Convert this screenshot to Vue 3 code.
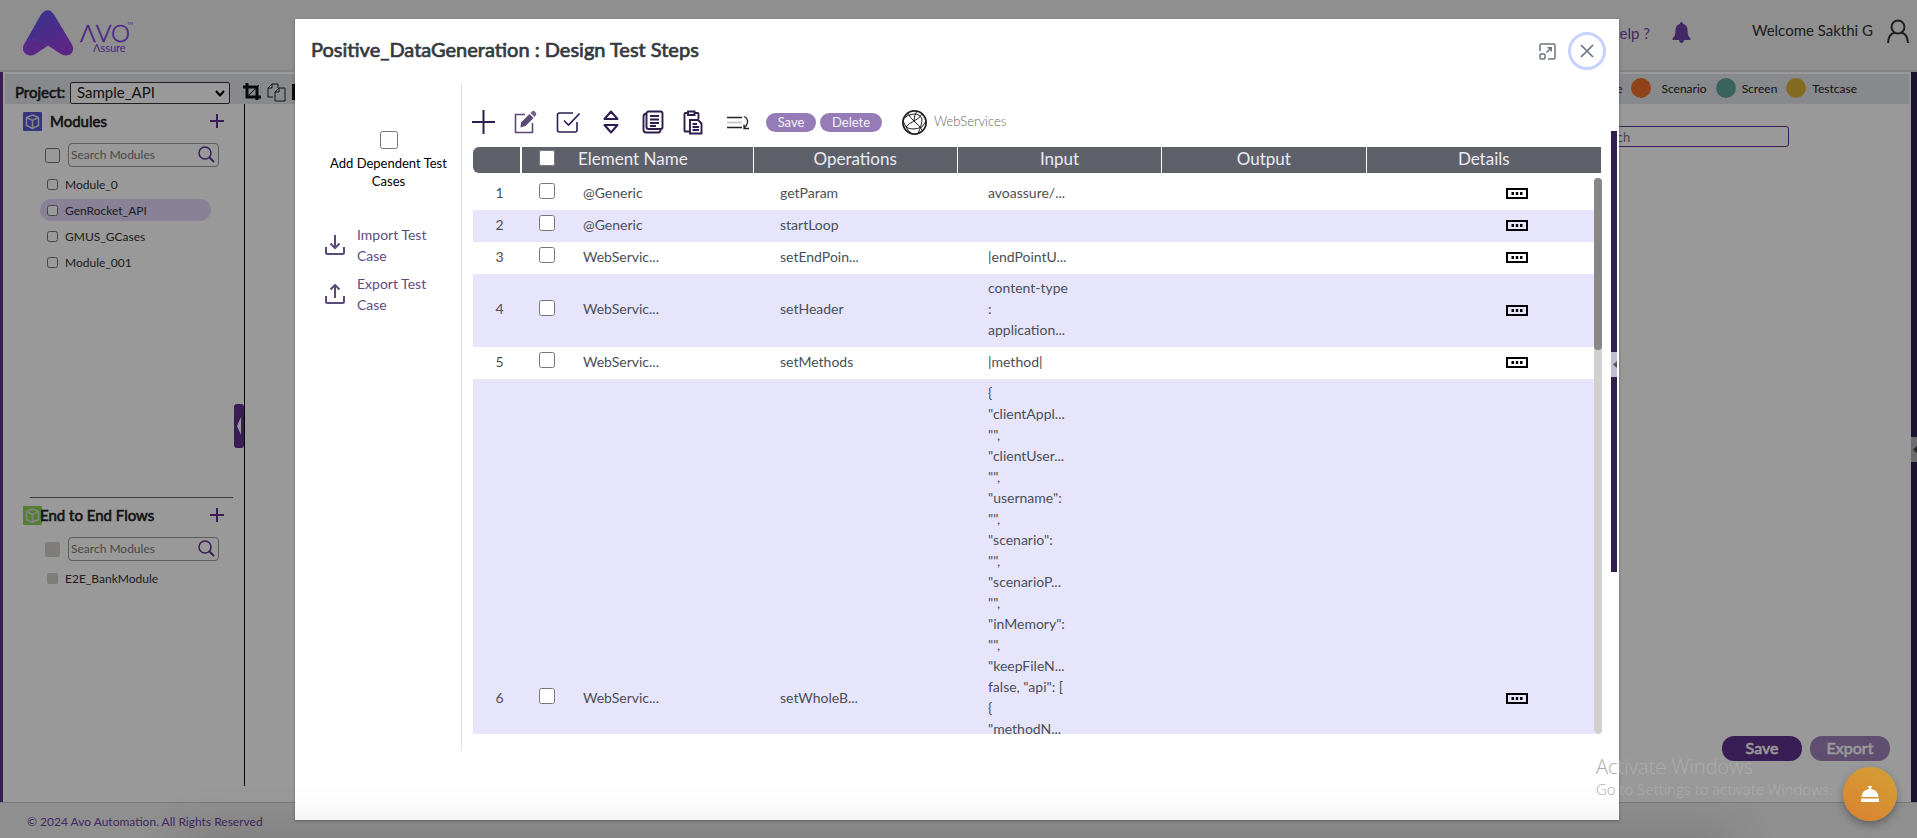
<script setup>
import { ref, reactive, computed } from 'vue'

const project = ref('Sample_API')
const modules = reactive([
  { name: 'Module_0', checked: false, active: false },
  { name: 'GenRocket_API', checked: false, active: true },
  { name: 'GMUS_GCases', checked: false, active: false },
  { name: 'Module_001', checked: false, active: false },
])
const legend = [
  { name: 'Module', kind: 'module' },
  { name: 'Scenario', kind: 'scenario' },
  { name: 'Screen', kind: 'screen' },
  { name: 'Testcase', kind: 'testcase' },
]
const headings = ['Operations', 'Input', 'Output', 'Details']
const steps = reactive([
  { element: '@Generic', op: 'getParam', input: ['avoassure/...'], checked: false },
  { element: '@Generic', op: 'startLoop', input: [], checked: false },
  { element: 'WebServic...', op: 'setEndPoin...', input: ['|endPointU...'], checked: false },
  { element: 'WebServic...', op: 'setHeader', input: ['content-type', ':', 'application...'], checked: false },
  { element: 'WebServic...', op: 'setMethods', input: ['|method|'], checked: false },
  {
    element: 'WebServic...',
    op: 'setWholeB...',
    tall: true,
    checked: false,
    input: ['{', '"clientAppl...', '"",', '"clientUser...', '"",', '"username":', '"",', '"scenario":', '"",', '"scenarioP...', '"",', '"inMemory":', '"",', '"keepFileN...', 'false, "api": [', '{', '"methodN...'],
  },
])
const all = computed({
  get: () => steps.every((s) => s.checked),
  set: (v) => steps.forEach((s) => (s.checked = v)),
})
const scroll = ref(0)
function onScroll(e) {
  scroll.value = (e.target.scrollTop / e.target.scrollHeight) * 100
}
</script>

<template>
  <div class="page">
    <header class="top">
      <svg class="logo" width="120" height="50" viewBox="0 0 120 50" role="img" aria-label="Avo Assure">
        <defs>
          <linearGradient id="lg" x1="0" y1="0" x2="0.6" y2="1">
            <stop offset="0" stop-color="#5a58f0" />
            <stop offset="1" stop-color="#9a40e0" />
          </linearGradient>
          <linearGradient id="lt" x1="0" y1="0" x2="1" y2="0">
            <stop offset="0" stop-color="#6a35d8" />
            <stop offset="1" stop-color="#8f46e8" />
          </linearGradient>
        </defs>
        <path d="M18 4.500Q25 -4 31 4.500L49 34.500Q52 41 47 44.500Q42 47 37 43.500L25 35.500L13 43.500Q8 47 3 44Q-2 40 1 34.500Z" fill="url(#lg)" />
        <path d="M1 34.500Q3 30 9 30Q16 30 25 35.500L13 43.500Q8 47 3 44Q-2 40 1 34.500Z" fill="#9a42dc" opacity=".55" />
        <path d="M3 31Q12 27 25 35.500" fill="none" stroke="#8468ff" stroke-width=".8" stroke-dasharray="2 1" />
        <text x="57" y="32" class="brand">ΛVO</text>
        <text x="70" y="42" class="brand-sub">Λssure</text>
        <text x="104" y="15" class="brand-tm">TM</text>
      </svg>
      <a href="#" class="help">Help ?</a>
      <button class="plain bell" aria-label="Notifications">
        <svg width="19" height="21" viewBox="0 0 19 21"><path d="M9.500 0C10.500 0 11 .8 11 1.700C14 2.500 15.500 5 15.500 8C15.500 13 16.500 14.500 18.500 16.500Q19 18 17.500 18H1.500Q0 18 .5 16.500C2.500 14.500 3.500 13 3.500 8C3.500 5 5 2.500 8 1.700C8 .8 8.500 0 9.500 0ZM7 18H12Q11.500 21 9.500 21Q7.500 21 7 18Z" fill="#6f45a5" /></svg>
      </button>
      <span class="welcome">Welcome Sakthi G</span>
      <button class="plain user" aria-label="Account">
        <svg width="22" height="24" viewBox="0 0 22 24" fill="none" stroke="#333" stroke-width="2"><circle cx="11" cy="8" r="6.500" /><path d="M1 24Q1.500 14.500 8 13.500M14 13.500Q20.500 14.500 21 24" /></svg>
      </button>
    </header>

    <main class="work">
      <div class="bar">
        <label for="project" class="project">Project:</label>
        <div class="pick">
          <select id="project" v-model="project"><option>Sample_API</option></select>
          <svg class="caret" width="10" height="7" viewBox="0 0 10 7" fill="none" stroke="#000" stroke-width="2"><path d="M1 1L5 5.500L9 1" /></svg>
        </div>
        <svg class="tool" width="18" height="18" viewBox="0 0 18 18" fill="none" stroke="#111" stroke-width="3"><path d="M0 4H14V17M4 0V14H18" /><path d="M4 14L16 2" stroke-width="1" /></svg>
        <svg class="tool" width="19" height="19" viewBox="0 0 19 19" fill="none" stroke="#222" stroke-width="1"><path d="M6 14H1V5L5 1H11V5M5 1V5H1M8 9L12 5H18V18H8ZM12 5V9H8" /></svg>
        <svg class="tool" width="18" height="18" viewBox="0 0 18 18"><rect width="18" height="16" y="1" fill="#111" /></svg>
        <ul class="legend">
          <li v-for="l in legend" :key="l.name" :class="l.kind"><i></i><span>{{ l.name }}</span></li>
        </ul>
      </div>

      <div class="columns">
        <aside class="side">
          <section class="mods">
            <div class="head">
              <svg width="19" height="19" viewBox="0 0 19 19"><rect width="19" height="19" rx="1" fill="#5a56d8" /><path d="M9.500 3L15.500 5.500V13.500L9.500 16.500L3.500 13.500V5.500Z" fill="none" stroke="#ddd" stroke-width="1.500" /><path d="M3.500 5.500L9.500 8.500L15.500 5.500M9.500 8.500V16.500" fill="none" stroke="#ddd" stroke-width="1.500" /></svg>
              <h2 class="spaced">Modules</h2>
              <button class="plain" aria-label="Add module"><svg width="14" height="14" viewBox="0 0 14 14"><path d="M0 7H14M7 0V14" stroke="#5f338f" stroke-width="2" /></svg></button>
            </div>
            <div class="find">
              <input type="checkbox" class="mid" aria-label="Select all modules" />
              <div class="box">
                <input type="text" placeholder="Search Modules" aria-label="Search Modules" />
                <svg width="17" height="17" viewBox="0 0 17 17" fill="none" stroke="#5f338f" stroke-width="1.500"><circle cx="7" cy="7" r="6" /><path d="M11 11L16 16" stroke-width="2" /></svg>
              </div>
            </div>
            <ul class="list">
              <li v-for="m in modules" :key="m.name" :class="{ active: m.active }">
                <label><input v-model="m.checked" type="checkbox" class="small" />{{ m.name }}</label>
              </li>
            </ul>
          </section>
          <section class="flows">
            <div class="head">
              <svg width="19" height="19" viewBox="0 0 19 19"><rect width="19" height="19" rx="1" fill="#8cd358" /><path d="M9.500 3L15.500 5.500V13.500L9.500 16.500L3.500 13.500V5.500Z" fill="none" stroke="#ddd" stroke-width="1.500" /><path d="M3.500 5.500L9.500 8.500L15.500 5.500M9.500 8.500V16.500" fill="none" stroke="#ddd" stroke-width="1.500" /></svg>
              <h2 class="tight">End to End Flows</h2>
              <button class="plain" aria-label="Add flow"><svg width="14" height="14" viewBox="0 0 14 14"><path d="M0 7H14M7 0V14" stroke="#5f338f" stroke-width="2" /></svg></button>
            </div>
            <div class="find">
              <input type="checkbox" class="mid off" disabled aria-label="Select all flows" />
              <div class="box">
                <input type="text" placeholder="Search Modules" aria-label="Search flows" />
                <svg width="17" height="17" viewBox="0 0 17 17" fill="none" stroke="#5f338f" stroke-width="1.500"><circle cx="7" cy="7" r="6" /><path d="M11 11L16 16" stroke-width="2" /></svg>
              </div>
            </div>
            <ul class="list">
              <li><label><input type="checkbox" class="small off" disabled />E2E_BankModule</label></li>
            </ul>
          </section>
          <button class="plain handle" aria-label="Collapse sidebar"><svg width="5" height="18" viewBox="0 0 5 18"><path d="M4 0V18L0 9Z" fill="#fff" /></svg></button>
        </aside>
        <div class="canvas">
          <input type="text" class="search" placeholder="Search" aria-label="Search" />
          <div class="actions">
            <button class="pill strong">Save</button>
            <button class="pill faint">Export</button>
          </div>
        </div>
      </div>
      <button class="plain edge" aria-label="Open panel"><svg width="4" height="7" viewBox="0 0 4 7"><path d="M4 0V7L0 3.500Z" fill="#444" /></svg></button>
    </main>

    <footer class="foot">© 2024 Avo Automation. All Rights Reserved</footer>

    <div class="mask">
      <div class="modal" role="dialog" aria-labelledby="dlg-title">
        <div class="modal-head">
          <h1 id="dlg-title">Positive_DataGeneration : Design Test Steps</h1>
          <button class="plain" aria-label="Maximize">
            <svg width="17" height="17" viewBox="0 0 17 17" fill="none" stroke="#6c757d" stroke-width="1.500"><path d="M1 8V2.500Q1 1 2.500 1H14.500Q16 1 16 2.500V14.500Q16 16 14.500 16H9" /><rect x="1" y="11" width="5" height="5" rx="1" /><path d="M7.500 9.500L12 5M8.500 4.800H12.200V8.500" /></svg>
          </button>
          <button class="plain close" aria-label="Close">
            <svg width="14" height="14" viewBox="0 0 14 14"><path d="M1 1L13 13M13 1L1 13" stroke="#6c757d" stroke-width="1.700" /></svg>
          </button>
        </div>
        <div class="modal-body">
          <aside class="panel">
            <label class="dependent"><input type="checkbox" class="large" /><span>Add Dependent Test Cases</span></label>
            <button class="plain io">
              <svg width="20" height="20" viewBox="0 0 20 20" fill="none" stroke="#5b4a75" stroke-width="2"><path d="M1 12V17.500Q1 19 2.500 19H17.500Q19 19 19 17.500V12M10 0V13M5.500 8.500L10 13L14.500 8.500" /></svg>
              <span>Import Test Case</span>
            </button>
            <button class="plain io">
              <svg width="20" height="20" viewBox="0 0 20 20" fill="none" stroke="#5b4a75" stroke-width="2"><path d="M1 12V17.500Q1 19 2.500 19H17.500Q19 19 19 17.500V12M10 14V1M5.500 5.500L10 1L14.500 5.500" /></svg>
              <span>Export Test Case</span>
            </button>
          </aside>
          <section class="steps">
            <div class="toolbar">
              <div class="icons">
                <button class="plain" aria-label="Add step"><svg width="23" height="24" viewBox="0 0 23 24"><path d="M0 12H23M11.500 0V24" stroke="#2f1d4d" stroke-width="2" /></svg></button>
                <button class="plain" aria-label="Edit step"><svg width="23" height="24" viewBox="0 0 23 24"><path d="M11 4.500H1.500V22.500H18.500V13" fill="none" stroke="#5b4a75" stroke-width="1.600" /><path d="M7 12.500L15.500 4L19.500 8L11.500 16L6.500 17.500Z" fill="#5b4a75" /><path d="M16.500 3L18.500 1Q19.500 .5 20.500 1.300L22 3Q22.800 4 22 5L20.500 7Z" fill="#6f6088" /></svg></button>
                <button class="plain" aria-label="Select steps"><svg width="24" height="24" viewBox="0 0 24 24" fill="none" stroke="#2f1d4d" stroke-width="1.600"><path d="M17 3H3.500Q1.500 3 1.500 5V20Q1.500 22 3.500 22H19Q21 22 21 20V12M8 10.500L12.500 15L23.500 3.500" /></svg></button>
                <button class="plain" aria-label="Move step"><svg width="24" height="24" viewBox="0 0 24 24" fill="none" stroke="#2f1d4d" stroke-width="2" stroke-linejoin="round"><path d="M12 1.500L18.500 9H5.500ZM12 22.500L18.500 15H5.500Z" /></svg></button>
                <button class="plain" aria-label="Copy steps"><svg width="22" height="24" viewBox="0 0 22 24" fill="none" stroke="#2f1d4d" stroke-width="1.900"><rect x="4.500" y="1.500" width="16" height="17.500" rx="2" /><path d="M4.500 3.500Q1.500 4 1.500 6.500V19.500Q1.500 22.500 4 22.500H16.500Q18.500 22.500 18.500 19.500M8 6H17M8 9.500H17M8 13H17M8 16H14" /></svg></button>
                <button class="plain" aria-label="Paste steps"><svg width="20" height="25" viewBox="0 0 20 25" fill="none" stroke="#2f1d4d" stroke-width="1.900"><path d="M6 21.500H2.500Q1.500 21.500 1.500 20.500V4Q1.500 3 2.500 3H5M11 3H14.500Q15.500 3 15.500 4V9M5 1.500H11.500V5H5Z" /><path d="M7 10H15L18.500 13.500V23.500H7ZM9.500 14H14M9.500 17H16M9.500 20H16" /></svg></button>
                <button class="plain" aria-label="Skip to step"><svg width="32" height="24" viewBox="0 0 32 24" fill="none"><path d="M5 7.500H20M5 17.500H20" stroke="#222" stroke-width="1.500" /><path d="M5 12.500H20" stroke="#ccc" stroke-width="2" /><path d="M22 6.500Q26 8 25.500 12.500Q25 16 22 18M22 14.500V18.500H27" stroke="#222" stroke-width="1.300" /></svg></button>
              </div>
              <button class="chip save">Save</button>
              <button class="chip delete">Delete</button>
              <div class="service">
                <svg width="25" height="25" viewBox="0 0 25 25" fill="none" stroke="#222" stroke-width="1"><circle cx="12.500" cy="12.500" r="11.600" stroke-width="1.800" /><path d="M6 3Q8 8 12 11M15 1Q12 5 12 11M20 4Q17 9 12 11M12 11Q7 13 4 17L1 11M12 11Q17 15 20 20M4 17Q10 21 20 17L24 11M1 9Q6 4 12 4Q18 4 20 9Q20 14 16 24M4 17Q6 21 10 24" /></svg>
                <span>WebServices</span>
              </div>
            </div>
            <table class="thead">
              <colgroup><col class="h-num" /><col class="h-el" /><col /><col /><col /><col class="h-det" /></colgroup>
              <thead>
                <tr>
                  <th class="first"></th>
                  <th class="el"><input v-model="all" type="checkbox" class="row" aria-label="Select all steps" /><span>Element Name</span></th>
                  <th v-for="h in headings" :key="h">{{ h }}</th>
                </tr>
              </thead>
            </table>
            <div class="view">
              <div class="rows" @scroll="onScroll">
                <table class="tbody">
                  <colgroup><col class="b-num" /><col class="b-check" /><col class="b-el" /><col class="b-op" /><col class="b-in" /><col /><col class="b-det" /></colgroup>
                  <tbody>
                    <tr v-for="(s, i) in steps" :key="i" :class="{ tall: s.tall }">
                      <td class="num">{{ i + 1 }}</td>
                      <td class="check"><input v-model="s.checked" type="checkbox" class="row" :aria-label="'Select step ' + (i + 1)" /></td>
                      <td>{{ s.element }}</td>
                      <td>{{ s.op }}</td>
                      <td class="in"><div v-for="(t, k) in s.input" :key="k">{{ t }}</div></td>
                      <td></td>
                      <td class="det">
                        <button class="plain" aria-label="Details"><svg width="22" height="11" viewBox="0 0 22 11"><rect x="1" y="1" width="20" height="9" fill="none" stroke="#000" stroke-width="2" /><path d="M5.500 4H8V7H5.500ZM9.800 4H12.200V7H9.800ZM14 4H16.500V7H14Z" /></svg></button>
                      </td>
                    </tr>
                  </tbody>
                </table>
              </div>
              <div class="track"><div class="thumb" :style="{ top: scroll + '%' }"></div></div>
            </div>
          </section>
        </div>
        <button class="plain rail" aria-label="Open details"><span><svg width="4" height="7" viewBox="0 0 4 7"><path d="M4 0V7L0 3.500Z" fill="#555" /></svg></span></button>
      </div>
    </div>

    <div class="glow"></div>
    <div class="watermark">
      <p class="wm-big">Activate Windows</p>
      <p class="wm-small">Go to Settings to activate Windows.</p>
    </div>
    <button class="plain fab" aria-label="Assistance">
      <svg width="18" height="17" viewBox="0 0 18 17" fill="#fff"><path d="M7 0H11V1.500H10V3Q17 4 17.500 11H.5Q1 4 8 3V1.500H7ZM0 12.500H18V16H0Z" /></svg>
    </button>
  </div>
</template>

<style>
body { margin: 0; }
</style>

<style scoped>
* { box-sizing: border-box; }
.page { position: relative; display: flex; flex-direction: column; height: 100vh; overflow: hidden; background: #fff; font-family: Lato, "Liberation Sans", sans-serif; font-size: 14px; color: #343a40; }
button, input, select { font-family: inherit; }
h1, h2, p, ul { margin: 0; padding: 0; }
ul { list-style: none; }
input[type="checkbox"] { margin: 0; flex: none; }
.plain { display: flex; align-items: center; justify-content: center; padding: 0; border: 0; background: none; color: inherit; cursor: pointer; }
.small { width: 11px; height: 11px; }
.mid { width: 15px; height: 15px; }
.row { width: 16px; height: 16px; }
.large { width: 18px; height: 18px; }
.off { appearance: none; border-radius: 2px; background: #d3d0cb; }

.top { display: flex; align-items: center; flex: none; height: 72px; padding: 0 8px 0 23px; background: #eee; border-bottom: 2px solid #dcdcdc; }
.brand { font-size: 24px; font-weight: 300; fill: url(#lt); stroke: #7a3de0; stroke-width: 0.5px; }
.brand-sub { font-size: 11px; fill: #7e40dd; }
.brand-tm { font-size: 4px; fill: #7e40dd; }
.logo { margin-bottom: 1px; overflow: visible; }
.help { margin-left: auto; font-size: 15px; color: #7347a5; text-decoration: none; padding-bottom: 4px; }
.bell { margin: 0 61px 6px 22px; }
.welcome { font-size: 15px; color: #333; padding-bottom: 10px; }
.user { margin: 0 0 8px 14px; }

.work { position: relative; z-index: 0; display: flex; flex-direction: column; flex: 1; min-height: 0; padding: 2px 8px 0 5px; }
.work::before, .work::after { content: ""; position: absolute; top: 0; bottom: 0; }
.work::before { left: 0; width: 3px; background: #5f338f; }
.work::after { right: 0; width: 6px; background: #2d2050; }
.bar { display: flex; align-items: center; flex: none; height: 30px; padding-left: 10px; background: #e3e5e9; }
.project { width: 55px; font-size: 15px; -webkit-text-stroke: 0.6px; color: #222; padding-top: 6px; }
.pick { position: relative; align-self: flex-end; margin-right: 13px; }
.pick select { appearance: none; display: block; width: 160px; height: 22px; padding: 0 6px 2px; border: 1px solid #333; border-radius: 2px; background: #fff; font-size: 15px; line-height: 18px; color: #222; }
.caret { position: absolute; right: 5px; top: 8px; pointer-events: none; }
.tool { margin: 6px 6px 0 0; }
.legend { display: flex; margin-left: auto; padding: 0 52px 2px 0; font-size: 12px; color: #222; }
.legend li { display: flex; align-items: center; gap: 6px; margin-left: 9px; }
.legend i { width: 20px; height: 20px; border-radius: 50%; }
.module i { background: #8a4ff0; }
.scenario i { background: #f07028; }
.legend .scenario { gap: 10px; }
.screen i { background: #5fa59b; }
.testcase i { background: #dcb338; }

.columns { display: flex; flex: 1; min-height: 0; }
.side { position: relative; display: flex; flex-direction: column; flex: none; width: 240px; margin-bottom: 16px; padding-left: 18px; border-right: 1px solid #000; }
.mods { position: relative; height: 394px; margin-right: 11px; padding-top: 7px; }
.mods::after { content: ""; position: absolute; left: 7px; right: 0; bottom: 0; height: 1px; background: #666; }
.flows { margin-right: 11px; padding-top: 7px; }
.head { display: flex; align-items: center; height: 20px; }
.head h2 { font-size: 15px; font-weight: 400; -webkit-text-stroke: 0.6px; color: #222; }
.head .spaced { margin-left: 8px; }
.head .tight { margin-left: -2px; }
.head button { margin: 0 9px 0 auto; }
.find { display: flex; align-items: center; margin: 12px 14px 0 22px; gap: 8px; }
.box { display: flex; align-items: center; flex: 1; min-width: 0; height: 24px; padding: 0 3px 2px 2px; border: 1px solid #999; border-radius: 4px; }
.box input { flex: 1; min-width: 0; height: 18px; padding: 0; border: 0; background: none; font-size: 12px; outline: 0; }
.box input::placeholder { color: #7a7a7a; }
.list { margin: 6px 22px 0 17px; }
.list li { height: 22px; margin-bottom: 4px; padding-left: 7px; border-radius: 11px; }
.list label { display: flex; align-items: center; gap: 7px; height: 22px; font-size: 12px; color: #333; }
.active { background: #e4d9fb; }
.handle { position: absolute; right: 0; top: 300px; width: 10px; height: 44px; border-radius: 3px; background: #5f338f; }
.canvas { display: flex; flex-direction: column; align-items: flex-end; justify-content: space-between; flex: 1; padding: 22px 19px 41px 0; }
.search { width: 244px; height: 21px; margin-right: 101px; padding: 0 46px; border: 1px solid #5f338f; border-radius: 3px; background: none; font-size: 13px; }
.actions { display: flex; gap: 8px; }
.pill { width: 80px; height: 25px; padding: 0 0 2px; border: 0; border-radius: 12px; font-size: 16px; -webkit-text-stroke: 0.6px; color: #fff; }
.strong { background: #5f338f; }
.faint { background: #9f83bb; }
.edge { position: absolute; right: 0; top: 365px; z-index: 1; width: 6px; height: 25px; justify-content: flex-end; background: #b5b5bb; }
.foot { flex: none; height: 36px; padding-left: 27px; border-top: 1px solid #ccc; background: #eee; font-size: 12px; line-height: 38px; color: #6f45a5; }

.mask { position: absolute; inset: 0; display: flex; padding: 19px 298px 18px 295px; background: rgba(0, 0, 0, 0.4); }
.modal { position: relative; display: flex; flex-direction: column; flex: 1; min-width: 0; background: #fff; box-shadow: 0 1px 3px rgba(0, 0, 0, 0.3); }
.modal-head { display: flex; align-items: center; flex: none; height: 64px; padding: 0 13px 0 16px; }
.modal-head h1 { flex: 1; font-size: 20px; font-weight: 400; -webkit-text-stroke: 0.7px; line-height: 24px; color: #343a40; padding-bottom: 4px; }
.close { width: 38px; height: 38px; margin-left: 12px; border: 3px solid #c7d2fe; border-radius: 50%; }
.modal-body { display: flex; flex: 1; min-height: 0; padding-bottom: 69px; }
.panel { flex: none; width: 167px; padding: 48px 20px 0 30px; border-right: 1px solid #dee2e6; }
.dependent { display: flex; flex-direction: column; align-items: center; gap: 5px; margin-right: -11px; margin-bottom: 34px; font-size: 13px; line-height: 18px; text-align: center; color: #000; }
.io { gap: 12px; width: 116px; margin-bottom: 7px; justify-content: flex-start; font-size: 14px; line-height: 21px; text-align: left; color: #5f4b80; }
.io svg { flex: none; }
.steps { display: flex; flex-direction: column; flex: 1; min-width: 0; padding: 14px 17px 17px 11px; }
.toolbar { display: flex; align-items: center; flex: none; height: 50px; }
.icons { display: flex; align-items: center; gap: 19px; margin: 0 12px 0 -1px; }
.chip { height: 19px; padding: 0 0 1px; border: 0; border-radius: 10px; background: #957cb6; font-size: 13px; color: #f4f0fa; }
.save { width: 50px; margin-right: 4px; }
.delete { width: 62px; margin-right: 20px; }
.service { display: flex; align-items: center; gap: 7px; font-size: 13px; font-weight: 300; color: #666; }
.service span { padding-bottom: 2px; }
table { border-collapse: collapse; table-layout: fixed; width: 100%; }
.thead { flex: none; width: calc(100% - 1px); border-radius: 6px 0 0 6px; overflow: hidden; }
.thead th { height: 26px; padding: 0 0 2px; border-right: 1px solid #fff; background: #5f616a; font-size: 17px; font-weight: 400; line-height: 24px; color: #eceaf2; }
.thead th:last-child { border-right: 0; }
.thead .first { border-right-width: 2px; }
.thead .el { text-align: left; padding-left: 17px; }
.thead .el input { margin: 0 23px 5px 0; vertical-align: middle; }
.h-num { width: 48px; }
.h-el { width: 232px; }
.h-det { width: 235px; }
.view { display: flex; flex: 1; min-height: 0; margin-top: 5px; }
.rows { flex: 1; min-width: 0; overflow-y: auto; scrollbar-width: none; }
.track { position: relative; flex: none; width: 8px; border-radius: 4px; background: #d1d0ce; }
.thumb { position: absolute; left: 0; width: 8px; height: 31%; border-radius: 4px; background: #888785; }
.tbody td { height: 32px; padding: 3px 0 7px; line-height: 21px; color: #495057; }
.tbody tr:nth-child(even) { background: #e7e5fc; }
.tbody .num { padding-left: 1px; text-align: center; }
.tbody .check { padding: 0 0 6px 14px; line-height: 16px; }
.check input { display: block; }
.tbody .tall td { height: 640px; }
.tall .in { vertical-align: top; }
.det button { margin: 3px auto 0; }
.b-num { width: 52px; }
.b-check { width: 58px; }
.b-el { width: 197px; }
.b-op { width: 208px; }
.b-in { width: 204px; }
.b-det { width: 154px; }
.rail { position: absolute; right: 2px; top: 112px; bottom: 248px; width: 6px; align-items: flex-start; padding-top: 221px; background: #31204f; }
.rail span { display: flex; align-items: center; justify-content: flex-end; width: 6px; height: 25px; background: #c2bdd0; }

.glow { position: absolute; left: 190px; right: 190px; top: 100%; height: 40px; box-shadow: 0 0 50px 4px rgba(0, 0, 0, 0.16); pointer-events: none; }
.watermark { position: absolute; bottom: 40px; right: 85px; width: 236px; font-family: "Open Sans", sans-serif; font-weight: 300; color: #acacac; white-space: nowrap; pointer-events: none; }
.wm-big { font-size: 20px; line-height: 26px; }
.wm-small { font-size: 15px; line-height: 18px; }
.fab { position: absolute; right: 20px; bottom: 17px; width: 54px; height: 54px; border-radius: 50%; background: linear-gradient(30deg, #dc8030, #d2a136); box-shadow: 0 4px 8px rgba(0, 0, 0, 0.3); }
</style>
